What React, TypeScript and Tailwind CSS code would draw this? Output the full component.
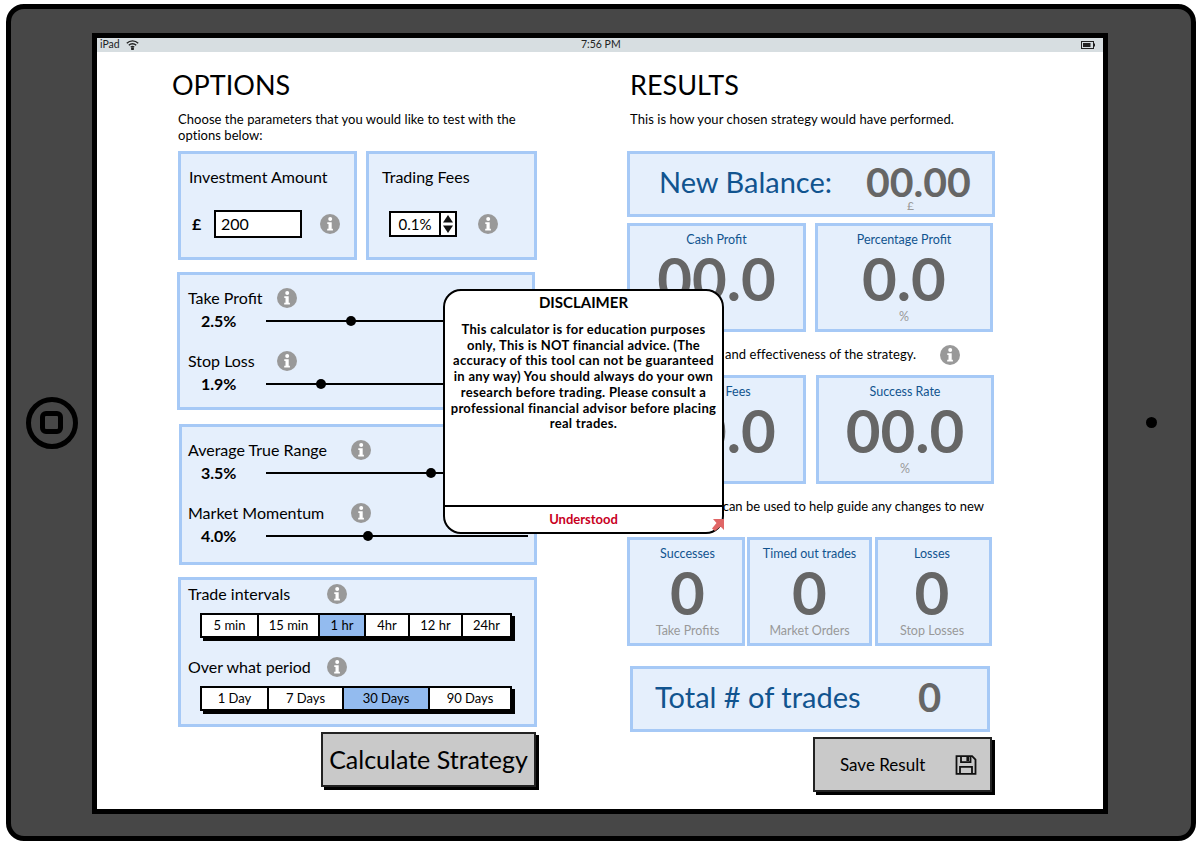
import type { ReactNode } from "react";

const INTERVALS = [
  { label: "5 min", w: "w-[55px]" },
  { label: "15 min", w: "w-[61px]" },
  { label: "1 hr", w: "w-[46px]", active: true },
  { label: "4hr", w: "w-[44px]" },
  { label: "12 hr", w: "w-[53px]" },
  { label: "24hr", w: "flex-1" },
];

const PERIODS = [
  { label: "1 Day", w: "w-[65px]" },
  { label: "7 Days", w: "w-[75px]" },
  { label: "30 Days", w: "w-[86px]", active: true },
  { label: "90 Days", w: "flex-1" },
];

function InfoIcon() {
  return (
    <svg width="20" height="20" viewBox="0 0 20 20" className="shrink-0">
      <circle cx="10" cy="10" r="10" fill="#999999" />
      <circle cx="10.2" cy="4.9" r="2" fill="#fff" />
      <path d="M7.3 8.2h4.4v6.5h1.2v1.9H7.2v-1.9h1.3v-4.6H7.3z" fill="#fff" />
    </svg>
  );
}

function Card({ className, children }: { className: string; children: ReactNode }) {
  return (
    <div className={`border-[3px] border-[#a6c9f6] bg-[#e5effc] ${className}`}>{children}</div>
  );
}

function SliderRow({
  label,
  labelWidth,
  value,
  percent,
}: {
  label: string;
  labelWidth: string;
  value: string;
  percent: number;
}) {
  return (
    <div>
      <div className="flex h-[20px] items-center pl-[8px]">
        <span className={`text-[16px] leading-[20px] ${labelWidth}`}>{label}</span>
        <InfoIcon />
      </div>
      <div className="mt-[3px] flex h-[20px] items-center pl-[21px]">
        <span className="w-[65px] text-[16px] font-bold">{value}</span>
        <div className="relative h-[2px] w-[262px] bg-black">
          <div
            className="absolute top-[-4px] ml-[-5px] h-[10px] w-[10px] rounded-full bg-black"
            style={{ left: `${percent}%` }}
          />
        </div>
      </div>
    </div>
  );
}

function Segments({ items }: { items: { label: string; w: string; active?: boolean }[] }) {
  return (
    <div className="ml-[19px] flex h-[25px] w-[312px] border-2 border-black bg-white shadow-[3px_3px_0_#000]">
      {items.map((item, i) => (
        <div
          key={item.label}
          className={`flex items-center justify-center text-[13px] ${item.w} ${
            i > 0 ? "border-l-2 border-black" : ""
          } ${item.active ? "bg-[#93bbef]" : ""}`}
        >
          {item.label}
        </div>
      ))}
    </div>
  );
}

function Stat({
  label,
  value,
  unit,
  className,
}: {
  label: string;
  value: string;
  unit?: string;
  className: string;
}) {
  return (
    <Card className={`flex flex-col items-center ${className}`}>
      <span className="mt-[6px] h-[16px] text-[12.5px] leading-[16px] text-[#11548f]">{label}</span>
      <span className="h-[60px] text-[60px] font-bold leading-[60px] text-[#666666]">{value}</span>
      {unit && <span className="mt-[1px] text-[12.5px] leading-[16px] text-[#999999]">{unit}</span>}
    </Card>
  );
}

function SaveIcon() {
  return (
    <svg width="22" height="22" viewBox="0 0 22 22" fill="none" stroke="#111" strokeWidth="1.8">
      <path d="M1.5 2.2h15.6l3.4 3.4v14.2h-19z" />
      <path d="M6 2.2v6h9.5v-6" />
      <rect x="11.4" y="3" width="2.6" height="4" fill="#111" stroke="none" />
      <path d="M5 19.8v-7h12v7" />
    </svg>
  );
}

export default function App() {
  return (
    <div className="h-[846px] w-[1202px] bg-white pl-[6px] pt-[4px] font-[Lato,sans-serif] text-black">
      <div className="flex h-[837px] w-[1190px] items-start rounded-[18px] border-[5px] border-black bg-[#474747]">
        <div className="flex h-full w-[81px] items-center justify-center">
          <div className="flex h-[52px] w-[52px] items-center justify-center rounded-full border-[5px] border-black">
            <div className="h-[23px] w-[23px] rounded-[6px] border-[5px] border-black" />
          </div>
        </div>

        <div className="relative mt-[24px] h-[781px] w-[1016px] border-[5px] border-black bg-white">
          <div className="relative flex h-[14px] items-center justify-between bg-[#d7dee1] px-[3px] text-[10.5px] text-[#222]">
            <div className="flex items-center gap-[6px]">
              <span>iPad</span>
              <svg width="13" height="10" viewBox="0 0 13 10" fill="none" stroke="#222" strokeWidth="1.4">
                <path d="M.8 3.2a8.2 8.2 0 0 1 11.4 0" />
                <path d="M2.8 5.2a5.3 5.3 0 0 1 7.4 0" />
                <path d="M4.8 7.2a2.5 2.5 0 0 1 3.4 0" />
                <circle cx="6.5" cy="8.8" r=".8" fill="#222" />
              </svg>
            </div>
            <span className="absolute left-[484px]">7:56 PM</span>
            <svg width="14" height="8" viewBox="0 0 14 8" className="mr-[5px]">
              <rect x=".5" y=".5" width="12" height="7" fill="none" stroke="#222" />
              <rect x="2" y="2" width="7.5" height="4" fill="#222" />
              <rect x="13" y="2.5" width="1" height="3" fill="#222" />
            </svg>
          </div>

          <div className="flex pl-[75px] pt-[18px]">
            <div className="w-[367px]">
              <h1 className="text-[27px] leading-[30px]">OPTIONS</h1>
              <p className="ml-[6px] mt-[11px] w-[350px] text-[13px] leading-[16px] tracking-[0.05px]">
                Choose the parameters that you would like to test with the options below:
              </p>

              <div className="ml-[6px] mt-[8px] flex gap-[9px]">
                <Card className="h-[109px] w-[179px] pl-[8px] pt-[13px]">
                  <div className="text-[16px] leading-[20px]">Investment Amount</div>
                  <div className="mt-[23px] flex items-center">
                    <span className="w-[25px] pl-[3px] text-[16px] font-bold">£</span>
                    <div className="flex h-[28px] w-[88px] items-center border-2 border-black bg-white pl-[5px] text-[16px]">
                      200
                    </div>
                    <div className="ml-[18px]">
                      <InfoIcon />
                    </div>
                  </div>
                </Card>
                <Card className="h-[109px] w-[171px] pl-[13px] pt-[13px]">
                  <div className="text-[16px] leading-[20px]">Trading Fees</div>
                  <div className="mt-[24px] flex items-center pl-[7px]">
                    <div className="flex h-[26px] w-[68px] border-2 border-black bg-white">
                      <div className="flex w-[50px] items-center justify-center text-[15px]">0.1%</div>
                      <div className="flex-1 border-l-2 border-black">
                        <svg width="14" height="22" viewBox="0 0 14 22">
                          <path d="M7 2l5 7.5H2z" fill="#111" />
                          <path d="M2 12.5h10L7 20z" fill="#111" />
                        </svg>
                      </div>
                    </div>
                    <div className="ml-[21px]">
                      <InfoIcon />
                    </div>
                  </div>
                </Card>
              </div>

              <Card className="ml-[5px] mt-[12px] h-[138px] w-[358px] pt-[13px]">
                <div className="flex flex-col gap-[20px]">
                  <SliderRow label="Take Profit" labelWidth="w-[89px]" value="2.5%" percent={32.5} />
                  <SliderRow label="Stop Loss" labelWidth="w-[89px]" value="1.9%" percent={21} />
                </div>
              </Card>

              <Card className="ml-[7px] mt-[14px] h-[141px] w-[358px] pt-[13px]">
                <div className="ml-[-2px] flex flex-col gap-[20px]">
                  <SliderRow label="Average True Range" labelWidth="w-[163px]" value="3.5%" percent={63} />
                  <SliderRow label="Market Momentum" labelWidth="w-[163px]" value="4.0%" percent={39} />
                </div>
              </Card>

              <Card className="ml-[6px] mt-[12px] h-[150px] w-[359px] pt-[4px]">
                <div className="flex h-[20px] items-center pl-[7px]">
                  <span className="w-[139px] text-[16px]">Trade intervals</span>
                  <InfoIcon />
                </div>
                <div className="mt-[9px]">
                  <Segments items={INTERVALS} />
                </div>
                <div className="mt-[19px] flex h-[20px] items-center pl-[7px]">
                  <span className="w-[139px] text-[16px]">Over what period</span>
                  <InfoIcon />
                </div>
                <div className="mt-[9px]">
                  <Segments items={PERIODS} />
                </div>
              </Card>

              <button className="ml-[149px] mt-[5px] flex h-[55px] w-[215px] items-center justify-center border-2 border-[#222] bg-[#c9c9c9] text-[25px] shadow-[3px_3px_0_#000]">
                Calculate Strategy
              </button>
            </div>

            <div className="ml-[88px] w-[368px]">
              <h1 className="ml-[3px] text-[27px] leading-[30px]">RESULTS</h1>
              <p className="ml-[3px] mt-[11px] text-[13px] leading-[16px] tracking-[0.07px]">
                This is how your chosen strategy would have performed.
              </p>

              <Card className="mt-[24px] flex h-[66px] w-[368px] items-center pb-[5px] pl-[29px]">
                <span className="w-[207px] text-[29px] text-[#11548f]">New Balance:</span>
                <span className="relative text-[41px] font-bold leading-[44px] text-[#666666]">
                  00.00
                  <span className="absolute left-[41px] top-[38px] text-[12px] font-normal leading-[16px] text-[#999999]">
                    £
                  </span>
                </span>
              </Card>

              <div className="mt-[6px] flex gap-[9px]">
                <Stat className="h-[109px] w-[179px]" label="Cash Profit" value="00.0" />
                <Stat className="h-[109px] w-[178px]" label="Percentage Profit" value="0.0" unit="%" />
              </div>

              <div className="mt-[15px] flex h-[16px] items-center pl-[98px] text-[13px] tracking-[0.07px]">
                <span className="w-[215px]">and effectiveness of the strategy.</span>
                <InfoIcon />
              </div>

              <div className="mt-[12px] flex gap-[10px]">
                <Stat className="h-[109px] w-[179px]" label="Trading Fees" value="00.0" />
                <Stat className="h-[109px] w-[178px]" label="Success Rate" value="00.0" unit="%" />
              </div>

              <div className="mt-[14px] flex h-[16px] justify-end pr-[11px] text-[13px] leading-[16px]">
                can be used to help guide any changes to new
              </div>

              <div className="mt-[23px] flex gap-[2px]">
                <Stat className="h-[109px] w-[118px] pl-[3px]" label="Successes" value="0" unit="Take Profits" />
                <Stat className="h-[109px] w-[125px]" label="Timed out trades" value="0" unit="Market Orders" />
                <Stat className="ml-[1px] h-[109px] w-[117px] pr-[3px]" label="Losses" value="0" unit="Stop Losses" />
              </div>

              <Card className="ml-[3px] mt-[20px] flex h-[66px] w-[360px] items-center pb-[5px] pl-[22px]">
                <span className="w-[263px] text-[29px] text-[#11548f]">Total # of trades</span>
                <span className="text-[40px] font-bold leading-[44px] text-[#666666]">0</span>
              </Card>

              <button className="ml-[186px] mt-[5px] flex h-[55px] w-[179px] items-center border-2 border-[#222] bg-[#c9c9c9] pl-[25px] text-[17px] shadow-[3px_3px_0_#000]">
                <span className="w-[115px] pt-[1px] text-left">Save Result</span>
                <SaveIcon />
              </button>
            </div>
          </div>

          <div className="absolute left-[346px] top-[251px] flex h-[245px] w-[281px] flex-col rounded-[18px] border-2 border-black bg-white">
            <h2 className="mt-[2px] text-center text-[15px] font-bold leading-[18px]">DISCLAIMER</h2>
            <p className="mx-[4px] mt-[11px] flex-1 text-center text-[13px] font-bold leading-[15.7px] tracking-[0.3px]">
              This calculator is for education purposes only, This is NOT financial advice. (The accuracy of
              this tool can not be guaranteed in any way) You should always do your own research before
              trading. Please consult a professional financial advisor before placing real trades.
            </p>
            <div className="flex h-[27px] items-center justify-center border-t-2 border-black pt-[1px] text-[13px] font-bold text-[#c8001e]">
              Understood
            </div>
            <svg width="13" height="13" viewBox="0 0 13 13" className="absolute bottom-[1px] right-[-3px]">
              <path d="M1 1h11v11L8.5 8.5 3 13 0 10.5 4.5 5z" fill="#e06666" />
            </svg>
          </div>
        </div>

        <div className="flex h-full flex-1 items-center justify-center pl-[4px]">
          <div className="h-[11px] w-[11px] rounded-full bg-black" />
        </div>
      </div>
    </div>
  );
}
